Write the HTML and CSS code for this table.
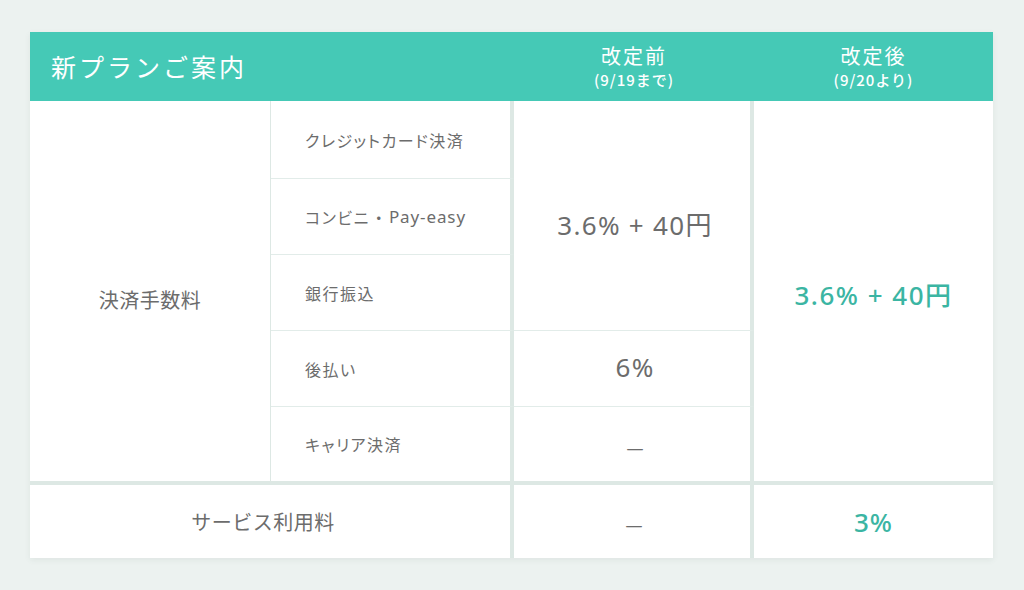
FILE: index.html
```html
<!DOCTYPE html>
<html lang="ja">
<head>
<meta charset="utf-8">
<title>新プランご案内</title>
<link rel="stylesheet" href="styles.css">
</head>
<body>
<div class="plan">
  <div class="head head-title">新プランご案内</div>
  <div class="head head-col"><span class="head-main">改定前</span><span class="head-sub">(9/19まで)</span></div>
  <div class="head head-col"><span class="head-main">改定後</span><span class="head-sub">(9/20より)</span></div>

  <div class="cell fee-label">決済手数料</div>

  <div class="cell method r1">クレジットカード決済</div>
  <div class="cell method r2">コンビニ<span class="mid">・</span><span class="latin">Pay-easy</span></div>
  <div class="cell method r3">銀行振込</div>
  <div class="cell method r4">後払い</div>
  <div class="cell method r5 last">キャリア決済</div>

  <div class="cell before before-main">3.6% + 40円</div>
  <div class="cell before before-late">6%</div>
  <div class="cell before before-carrier"><span class="dash">—</span></div>

  <div class="cell after after-main">3.6% + 40円</div>

  <div class="cell svc svc-label">サービス利用料</div>
  <div class="cell svc svc-before"><span class="dash">—</span></div>
  <div class="cell svc svc-after">3%</div>
</div>
</body>
</html>
```

FILE: styles.css
```css
* { box-sizing: border-box; }
html, body { margin: 0; }
body {
  background: #ecf2f0;
  padding: 32px 30px;
  font-family: "Noto Sans", "Noto Sans CJK JP", sans-serif;
  color: #6c6c6c;
}
.plan {
  width: 963px;
  display: grid;
  grid-template-columns: 241px 243px 240px 239px;
  grid-template-rows: 69px 78px 76px 76px 76px 74px 77px;
  background: #fff;
  box-shadow: 0 2px 6px rgba(60, 90, 80, 0.08);
}
.head {
  background: #45c9b6;
  color: #fff;
}
.head-title {
  grid-column: 1 / 3;
  display: flex;
  align-items: center;
  padding-left: 21px;
  font-family: "Noto Sans CJK JP", sans-serif;
  font-size: 25px;
  letter-spacing: 3px;
  padding-bottom: 2px;
}
.head-col {
  display: flex;
  flex-direction: column;
  align-items: center;
  justify-content: center;
  font-family: "Noto Sans CJK JP", sans-serif;
}
.head-main {
  font-size: 20px;
  line-height: 26px;
  letter-spacing: 2px;
}
.head-sub {
  font-size: 15px;
  line-height: 22px;
  font-weight: 500;
  letter-spacing: 1px;
}
.cell {
  display: flex;
  align-items: center;
  justify-content: center;
  border-color: #dde8e4;
  border-style: solid;
  border-width: 0;
}
.fee-label {
  grid-column: 1;
  grid-row: 2 / 7;
  border-right-width: 1px;
  font-size: 20px;
  letter-spacing: 0.5px;
  padding-top: 16px;
}
.method {
  grid-column: 2;
  justify-content: flex-start;
  padding-left: 34px;
  font-size: 16px;
  letter-spacing: 1.5px;
  font-feature-settings: "palt";
  border-right-width: 4px;
  border-bottom-width: 1px;
  border-bottom-color: #e2ece9;
}
.method .mid {
  font-feature-settings: normal;
  letter-spacing: 0;
  margin-left: 1px;
  margin-right: 2px;
}
.method .latin {
  font-size: 17px;
  letter-spacing: 0.9px;
}
.method.last { border-bottom-width: 0; }
.r1 { grid-row: 2; }
.r2 { grid-row: 3; }
.r3 { grid-row: 4; }
.r4 { grid-row: 5; }
.r5 { grid-row: 6; }
.before {
  grid-column: 3;
  border-right-width: 4px;
  font-size: 26px;
  letter-spacing: 1.3px;
  padding-left: 6px;
}
.before-main {
  grid-row: 2 / 5;
  border-bottom-width: 1px;
  border-bottom-color: #e2ece9;
  padding-top: 16px;
}
.before-late {
  grid-row: 5;
  border-bottom-width: 1px;
  border-bottom-color: #e2ece9;
  padding-bottom: 4px;
}
.before-carrier { grid-row: 6; }
.dash {
  font-size: 17px;
  letter-spacing: 0;
  padding-top: 6px;
}
.after-main {
  grid-column: 4;
  grid-row: 2 / 7;
  color: #3bb5a3;
  font-size: 26px;
  font-weight: 500;
  letter-spacing: 1.5px;
  padding-top: 6px;
}
.svc {
  grid-row: 7;
  border-top-width: 4px;
}
.svc-label {
  grid-column: 1 / 3;
  border-right-width: 4px;
  font-size: 20px;
  letter-spacing: 0.5px;
  padding-right: 14px;
}
.svc-before {
  grid-column: 3;
  border-right-width: 4px;
  padding-left: 4px;
}
.svc-after {
  grid-column: 4;
  color: #3bb5a3;
  font-size: 26px;
  font-weight: 500;
  letter-spacing: 1px;
}
```
